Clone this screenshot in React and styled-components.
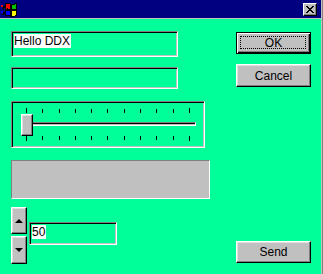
import React from 'react';
import styled, { createGlobalStyle } from 'styled-components';

const Global = createGlobalStyle`
  html, body { margin: 0; padding: 0; background: #00ff99; }
  body { font-family: "Liberation Sans", Arial, sans-serif; font-size: 11px; color: #000; }
  * { box-sizing: border-box; }
`;

const Frame = styled.div`
  width: 323px;
  height: 274px;
  border-right: 1px solid #808080;
`;

const Window = styled.div`
  height: 100%;
  display: flex;
  flex-direction: column;
  background: #00ff99;
  border-right: 1px solid #c0c0c0;
`;

const TitleBar = styled.div`
  height: 19px;
  flex: none;
  background: #000080;
  border-bottom: 1px solid #c0c0c0;
  display: flex;
  align-items: center;
  justify-content: space-between;
  padding: 0 4px 0 1px;
`;

const CloseButton = styled.div`
  width: 14px;
  height: 13px;
  margin-top: 1px;
  background: #c0c0c0;
  border-top: 1px solid #fff;
  border-left: 1px solid #fff;
  border-right: 1px solid #000;
  border-bottom: 1px solid #000;
  box-shadow: inset -1px -1px #808080;
  display: flex;
  align-items: center;
  justify-content: center;
`;

const Body = styled.div`
  flex: 1;
  display: flex;
  padding: 0 10px 0 11px;
`;

const LeftColumn = styled.div`
  width: 199px;
  display: flex;
  flex-direction: column;
  align-items: flex-start;
  padding-top: 12px;
`;

const RightColumn = styled.div`
  width: 75px;
  margin-left: 26px;
  display: flex;
  flex-direction: column;
  padding: 13px 0 11px;
`;

const Edit = styled.div`
  width: ${p => p.$w}px;
  height: ${p => p.$h}px;
  margin-top: ${p => p.$mt || 0}px;
  border-top: 1px solid #808080;
  border-left: 1px solid #808080;
  border-right: 1px solid #fff;
  border-bottom: 1px solid #fff;
  box-shadow: inset 1px 1px #000, inset -1px -1px #c0c0c0;
  padding: 2px 0 0 2px;
`;

const Selected = styled.span`
  display: inline-block;
  background: #fff;
  color: #000;
  font-size: 12px;
  line-height: 14px;
  padding-right: 1px;
`;

const Trackbar = styled.div`
  width: 194px;
  height: 47px;
  margin-top: 12px;
  border-top: 1px solid #808080;
  border-left: 1px solid #808080;
  border-right: 1px solid #fff;
  border-bottom: 1px solid #fff;
  box-shadow: inset 1px 1px #000, inset -1px -1px #c0c0c0;
  padding: 6px 1px 0 1px;
  display: flex;
  flex-direction: column;
`;

const TickRow = styled.div`
  height: 5px;
  padding: 0 13px;
  display: flex;
  justify-content: space-between;
  align-items: ${p => (p.$bottom ? 'flex-start' : 'flex-end')};
`;

const Tick = styled.div`
  width: 1px;
  height: ${p => (p.$long ? 5 : 4)}px;
  background: #000;
`;

const ThumbRow = styled.div`
  position: relative;
  height: 22px;
  margin-top: 1px;
  padding-top: 8px;
`;

const Groove = styled.div`
  margin-left: 8px;
  width: 175px;
  height: 4px;
  border-top: 1px solid #808080;
  border-left: 1px solid #808080;
  border-right: 1px solid #fff;
  border-bottom: 1px solid #fff;
  background: #c0c0c0;
  box-shadow: inset 0 1px #000;
`;

const Thumb = styled.div`
  position: absolute;
  left: 8px;
  top: 0;
  width: 12px;
  height: 22px;
  background: #c0c0c0;
  border-top: 1px solid #fff;
  border-left: 1px solid #fff;
  border-right: 1px solid #000;
  border-bottom: 1px solid #000;
  box-shadow: inset -1px -1px #808080, inset 1px 1px #dfdfdf;
`;

const GrayPanel = styled.div`
  width: 199px;
  height: 39px;
  margin-top: 12px;
  background: #c0c0c0;
  border-top: 1px solid #808080;
  border-left: 1px solid #808080;
  border-right: 1px solid #fff;
  border-bottom: 1px solid #fff;
`;

const SpinRow = styled.div`
  display: flex;
  margin-top: 8px;
  gap: 2px;
`;

const SpinColumn = styled.div`
  display: flex;
  flex-direction: column;
  gap: 2px;
`;

const SpinButton = styled.div`
  width: 16px;
  height: ${p => p.$h}px;
  background: #c0c0c0;
  border-top: 1px solid #fff;
  border-left: 1px solid #fff;
  border-right: 1px solid #000;
  border-bottom: 1px solid #000;
  box-shadow: inset -1px -1px #808080, inset 1px 1px #dfdfdf;
  display: flex;
  align-items: center;
  justify-content: center;
`;

const Arrow = styled.div`
  width: 0;
  height: 0;
  border-left: 4px solid transparent;
  border-right: 4px solid transparent;
  ${p => (p.$down ? 'border-top: 4px solid #000;' : 'border-bottom: 4px solid #000;')}
`;

const Button = styled.div`
  position: relative;
  height: ${p => p.$h || 23}px;
  margin-top: ${p => p.$mt || 0}px;
  background: #c0c0c0;
  border-top: 1px solid ${p => (p.$default ? '#000' : '#fff')};
  border-left: 1px solid ${p => (p.$default ? '#000' : '#fff')};
  border-right: 1px solid #000;
  border-bottom: 1px solid #000;
  box-shadow: ${p =>
    p.$default
      ? 'inset 1px 1px #fff, inset -1px -1px #000, inset -2px -2px #808080'
      : 'inset -1px -1px #808080, inset 1px 1px #dfdfdf'};
  display: flex;
  align-items: center;
  justify-content: center;
  font-size: 12px;
  line-height: 14px;
`;

const FocusRect = styled.div`
  position: absolute;
  left: 3px;
  top: 3px;
  right: 4px;
  bottom: 4px;
  border: 1px dotted #000;
`;

const Spacer = styled.div`
  flex: 1;
`;

function WinLogo() {
  return (
    <svg width="17" height="15" viewBox="0 0 17 15" shapeRendering="crispEdges">
      <path d="M4.5 2 Q6.5 1 9 2 L9 7.5 Q6.5 6.5 4.5 7.5 Z" fill="#ff0000" stroke="#000" strokeWidth="1" />
      <path d="M10 2 Q12.5 3 15.5 1.5 L15.5 7 Q12.5 8.5 10 7.5 Z" fill="#00c000" stroke="#000" strokeWidth="1" />
      <path d="M4.5 8.5 Q6.5 7.5 9 8.5 L9 14 Q6.5 13 4.5 14 Z" fill="#0000ff" stroke="#000" strokeWidth="1" />
      <path d="M10 8.5 Q12.5 9.5 15.5 8 L15.5 13.5 Q12.5 15 10 14 Z" fill="#ffff00" stroke="#000" strokeWidth="1" />
      <rect x="0" y="3" width="2" height="2" fill="#ff0000" />
      <rect x="2" y="4" width="2" height="2" fill="#000" />
      <rect x="0" y="9" width="2" height="2" fill="#0000ff" />
      <rect x="2" y="10" width="2" height="2" fill="#000" />
      <rect x="1" y="6" width="2" height="1" fill="#000" />
      <rect x="1" y="12" width="2" height="1" fill="#000" />
    </svg>
  );
}

function CloseGlyph() {
  return (
    <svg width="8" height="7" viewBox="0 0 8 7" shapeRendering="crispEdges">
      <path d="M0 0h2v1h-2z M6 0h2v1h-2z M1 1h2v1h-2z M5 1h2v1h-2z M2 2h4v1h-4z M3 3h2v1h-2z M2 4h4v1h-4z M1 5h2v1h-2z M5 5h2v1h-2z M0 6h2v1h-2z M6 6h2v1h-2z" fill="#000" />
    </svg>
  );
}

const ticks = Array.from({ length: 11 }, (_, i) => i);

export default function App() {
  return (
    <>
      <Global />
      <Frame>
        <Window>
          <TitleBar>
            <WinLogo />
            <CloseButton>
              <CloseGlyph />
            </CloseButton>
          </TitleBar>
          <Body>
            <LeftColumn>
              <Edit $w={167} $h={26}>
                <Selected>Hello DDX</Selected>
              </Edit>
              <Edit $w={167} $h={22} $mt={10} />
              <Trackbar>
                <TickRow>
                  {ticks.map(i => (
                    <Tick key={i} $long={i === 0 || i === 10} />
                  ))}
                </TickRow>
                <ThumbRow>
                  <Groove />
                  <Thumb />
                </ThumbRow>
                <TickRow $bottom>
                  {ticks.map(i => (
                    <Tick key={i} $long={i === 0 || i === 10} />
                  ))}
                </TickRow>
              </Trackbar>
              <GrayPanel />
              <SpinRow>
                <SpinColumn>
                  <SpinButton $h={27}>
                    <Arrow />
                  </SpinButton>
                  <SpinButton $h={28}>
                    <Arrow $down />
                  </SpinButton>
                </SpinColumn>
                <Edit $w={88} $h={23} $mt={15}>
                  <Selected>50</Selected>
                </Edit>
              </SpinRow>
            </LeftColumn>
            <RightColumn>
              <Button $default $h={22}>
                <FocusRect />
                OK
              </Button>
              <Button $mt={10}>Cancel</Button>
              <Spacer />
              <Button $h={22}>Send</Button>
            </RightColumn>
          </Body>
        </Window>
      </Frame>
    </>
  );
}
